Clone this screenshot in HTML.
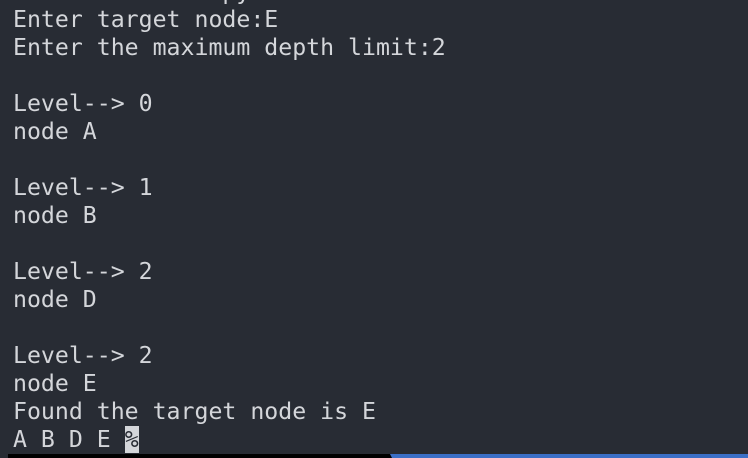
<!DOCTYPE html>
<html><head><style>
html,body{margin:0;padding:0;background:#282c34;width:748px;height:458px;overflow:hidden;position:relative}
pre{position:absolute;left:13px;top:-22px;margin:0;font-family:"DejaVu Sans Mono","Liberation Mono",monospace;font-size:23.2px;line-height:28px;color:#d4d6da;letter-spacing:0}
.cur{background:#d4d6da;color:#282c34}
.b1{position:absolute;left:8px;top:454px;width:386px;height:4px;background:#000}
.b2{position:absolute;left:390px;top:454px;width:358px;height:4px;background:#3b6fc6;clip-path:polygon(0 0,100% 0,100% 100%,2px 100%)}
</style></head><body>
<pre>               py
Enter target node:E
Enter the maximum depth limit:2

Level--&gt; 0
node A

Level--&gt; 1
node B

Level--&gt; 2
node D

Level--&gt; 2
node E
Found the target node is E
A B D E <span class="cur">%</span></pre>
<div class="b1"></div><div class="b2"></div>
</body></html>
